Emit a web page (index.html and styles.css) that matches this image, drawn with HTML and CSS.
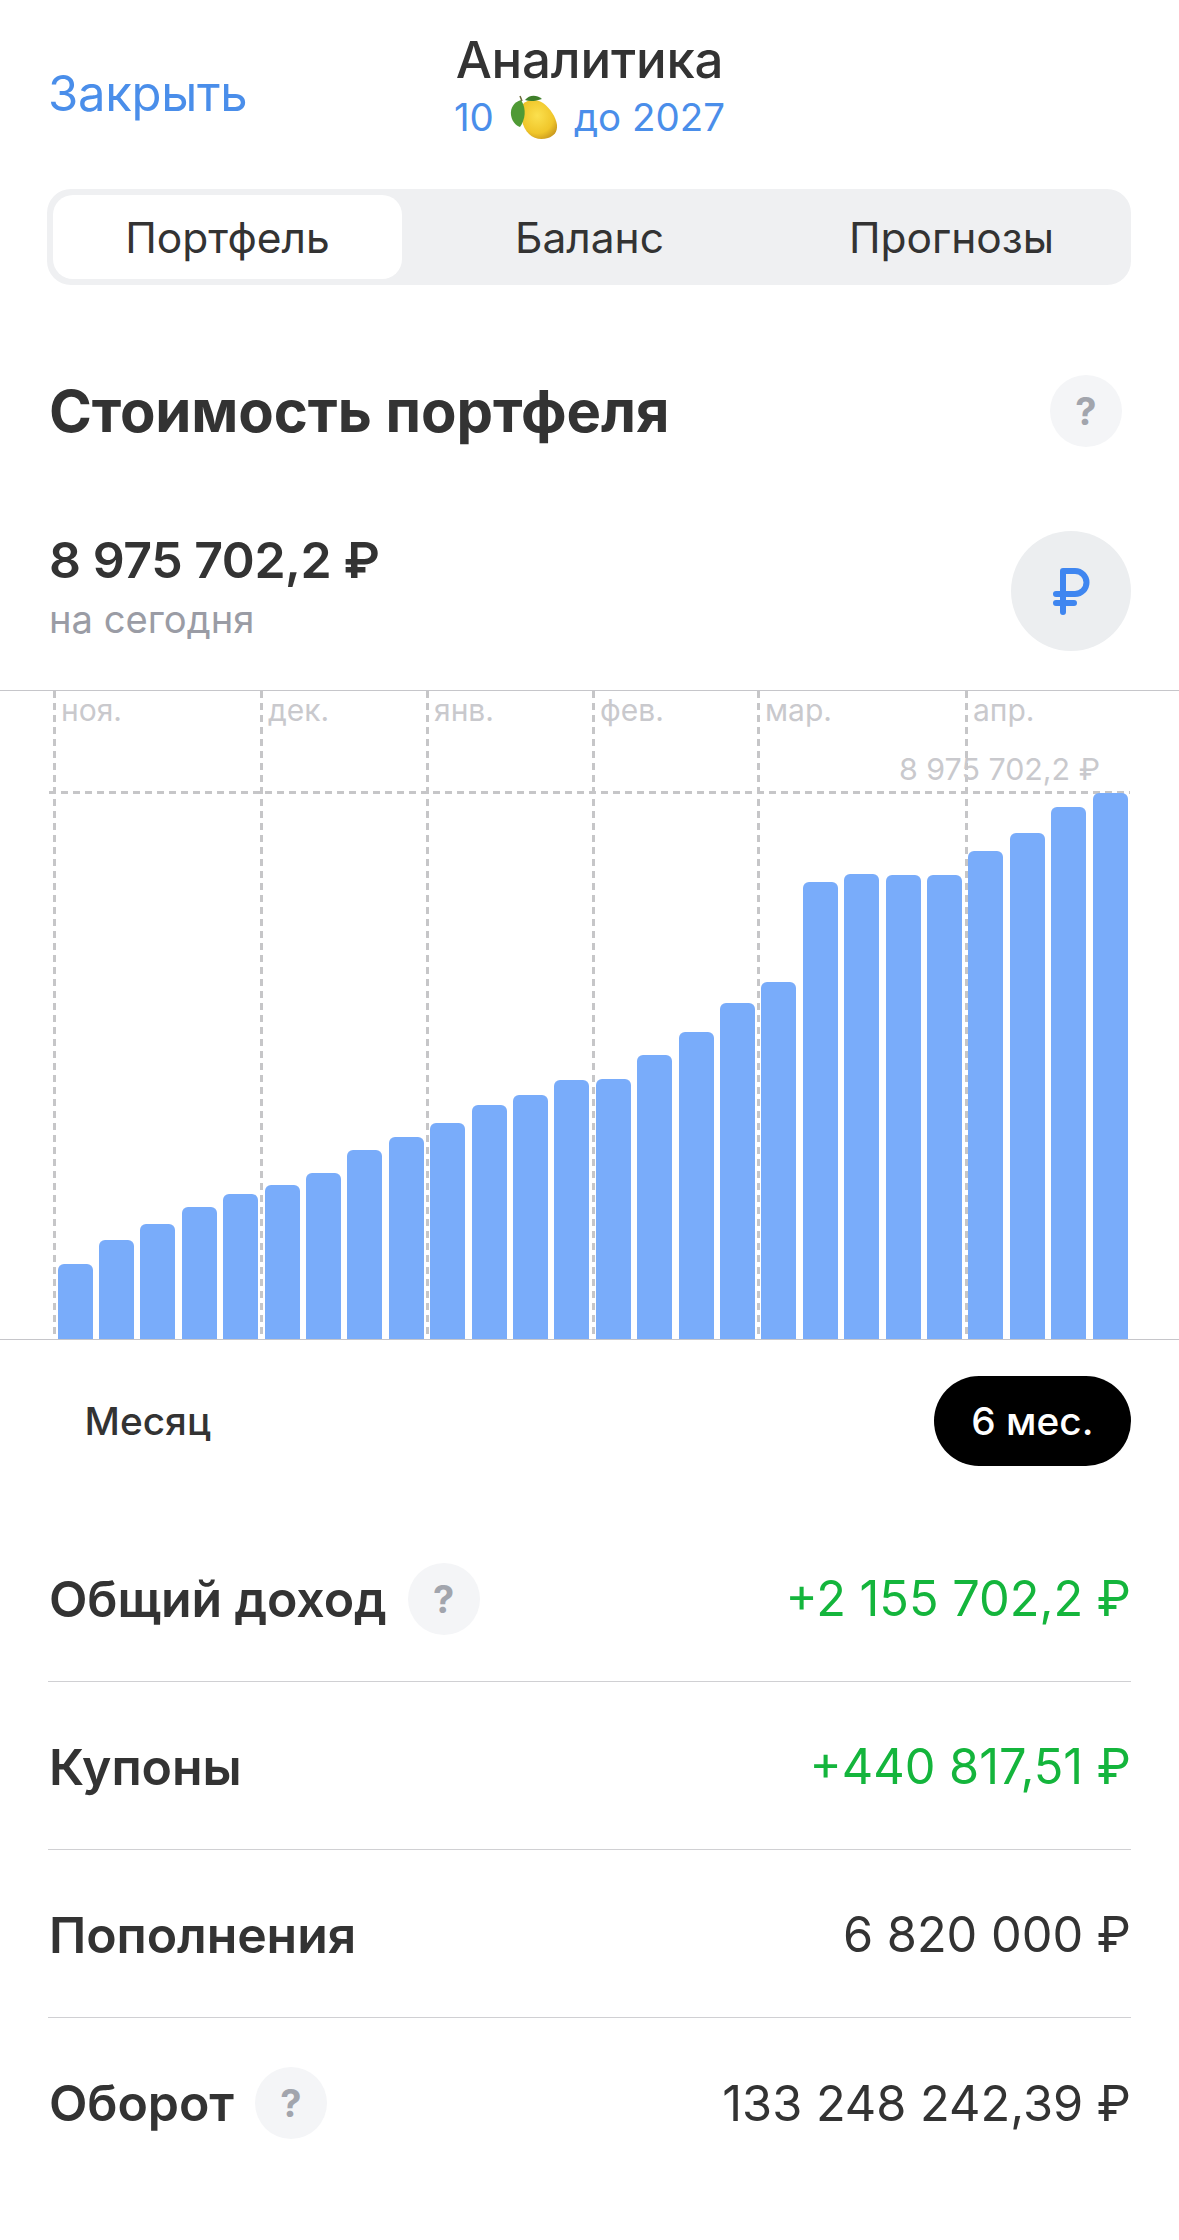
FILE: index.html
```html
<!DOCTYPE html>
<html lang="ru">
<head>
    <meta charset="UTF-8">
    <meta name="viewport" content="width=device-width, initial-scale=1.0">
    <title>Аналитика</title>
    <link rel="stylesheet" href="styles.css">
</head>
<body>
    <div class="header">
        <a class="close">Закрыть</a>
        <div class="header-title">
            <div class="title">Аналитика</div>
            <div class="subtitle">
                <span>10</span>
                <svg class="lemon" viewBox="0 0 48 46">
                    <defs>
                        <radialGradient id="lemonBody" cx="0.45" cy="0.4" r="0.7">
                            <stop offset="0" stop-color="#fbe04e"/>
                            <stop offset="0.65" stop-color="#f0c62a"/>
                            <stop offset="1" stop-color="#c4921c"/>
                        </radialGradient>
                    </defs>
                    <path d="M13 10 C18 5 27 5 33 9 C40 14 46 23 47 31 C47.5 38 44 42 38 44 C31 46 24 45 19 40 C12 33 9 21 13 10Z" fill="url(#lemonBody)"/>
                    <path d="M11 6 C4 8 0 14 1 21 C2 27 5 31 10 33 C15 26 17 15 11 6Z" fill="#4f9a35"/>
                    <path d="M15 6 C19 1 26 0 32 5 C26 7 20 8 15 6Z" fill="#3f7f2a"/>
                    <path d="M12 7 L10 2" stroke="#6b6a3a" stroke-width="1.5"/>
                </svg>
                <span>до 2027</span>
            </div>
        </div>
    </div>

    <div class="tabs">
        <div class="tab active">Портфель</div>
        <div class="tab">Баланс</div>
        <div class="tab">Прогнозы</div>
    </div>

    <div class="section-head">
        <h1>Стоимость портфеля</h1>
        <span class="help">?</span>
    </div>

    <div class="summary">
        <div>
            <div class="summary-value">8 975 702,2 ₽</div>
            <div class="summary-label">на сегодня</div>
        </div>
        <div class="currency">
            <svg viewBox="0 0 80 80" width="80" height="80">
                <path d="M32 61V20H44a11.5 11.5 0 0 1 0 23H25M25 52H43" fill="none" stroke="#3f86f0" stroke-width="6" stroke-linecap="round" stroke-linejoin="round"/>
            </svg>
        </div>
    </div>

    <div class="chart">
        <div class="vline" style="left: 53px"></div>
        <div class="vline" style="left: 260px"></div>
        <div class="vline" style="left: 426px"></div>
        <div class="vline" style="left: 592px"></div>
        <div class="vline" style="left: 757px"></div>
        <div class="vline" style="left: 965px"></div>
        <div class="hline"></div>
        <span class="month" style="left: 61px">ноя.</span>
        <span class="month" style="left: 268px">дек.</span>
        <span class="month" style="left: 434px">янв.</span>
        <span class="month" style="left: 600px">фев.</span>
        <span class="month" style="left: 765px">мар.</span>
        <span class="month" style="left: 973px">апр.</span>
        <span class="chart-max">8 975 702,2 ₽</span>
        <div class="bars">
            <div class="bar" style="height: 75px"></div>
            <div class="bar" style="height: 99px"></div>
            <div class="bar" style="height: 115px"></div>
            <div class="bar" style="height: 132px"></div>
            <div class="bar" style="height: 145px"></div>
            <div class="bar" style="height: 154px"></div>
            <div class="bar" style="height: 166px"></div>
            <div class="bar" style="height: 189px"></div>
            <div class="bar" style="height: 202px"></div>
            <div class="bar" style="height: 216px"></div>
            <div class="bar" style="height: 234px"></div>
            <div class="bar" style="height: 244px"></div>
            <div class="bar" style="height: 259px"></div>
            <div class="bar" style="height: 260px"></div>
            <div class="bar" style="height: 284px"></div>
            <div class="bar" style="height: 307px"></div>
            <div class="bar" style="height: 336px"></div>
            <div class="bar" style="height: 357px"></div>
            <div class="bar" style="height: 457px"></div>
            <div class="bar" style="height: 465px"></div>
            <div class="bar" style="height: 464px"></div>
            <div class="bar" style="height: 464px"></div>
            <div class="bar" style="height: 488px"></div>
            <div class="bar" style="height: 506px"></div>
            <div class="bar" style="height: 532px"></div>
            <div class="bar" style="height: 546px"></div>
        </div>
    </div>

    <div class="range">
        <div class="range-item">Месяц</div>
        <div class="range-item selected">6 мес.</div>
    </div>

    <div class="stats">
        <div class="stat">
            <div class="stat-name">Общий доход <span class="help">?</span></div>
            <div class="stat-value green">+2 155 702,2 ₽</div>
        </div>
        <div class="stat">
            <div class="stat-name">Купоны</div>
            <div class="stat-value green">+440 817,51 ₽</div>
        </div>
        <div class="stat">
            <div class="stat-name">Пополнения</div>
            <div class="stat-value">6 820 000 ₽</div>
        </div>
        <div class="stat">
            <div class="stat-name">Оборот <span class="help">?</span></div>
            <div class="stat-value">133 248 242,39 ₽</div>
        </div>
    </div>
</body>
</html>
```

FILE: styles.css
```css
body {
    margin: 0;
    font-family: Inter, "Liberation Sans", sans-serif;
    background: #fff;
    color: #333333;
}

.header {
    display: grid;
    grid-template-columns: 1fr auto 1fr;
    align-items: center;
    padding: 32px 48px 0;
    height: 114px;
}

.close {
    margin-top: 8px;
    font-size: 49px;
    letter-spacing: -0.3px;
    color: #4a8eea;
}

.header-title {
    text-align: center;
}

.title {
    font-size: 51px;
    line-height: 56px;
    font-weight: 500;
    letter-spacing: -0.2px;
}

.subtitle {
    display: flex;
    align-items: center;
    justify-content: center;
    gap: 16px;
    height: 58px;
    font-size: 38.5px;
    color: #4a8eea;
}

.lemon {
    width: 48px;
    height: 46px;
}

.tabs {
    display: grid;
    grid-template-columns: repeat(3, 349px);
    gap: 13px;
    box-sizing: border-box;
    width: 1084px;
    height: 96px;
    margin: 43px 0 0 47px;
    padding: 6px;
    background: #eff0f2;
    border-radius: 24px;
}

.tab {
    display: flex;
    align-items: center;
    justify-content: center;
    font-size: 42.5px;
    border-radius: 20px;
}

.tab.active {
    background: #fff;
}

.section-head {
    display: flex;
    align-items: center;
    justify-content: space-between;
    height: 72px;
    margin-top: 90px;
    padding: 0 57px 0 49px;
}

h1 {
    margin: 0;
    font-size: 58px;
    font-weight: 700;
    letter-spacing: -0.1px;
}

.help {
    display: inline-flex;
    align-items: center;
    justify-content: center;
    width: 72px;
    height: 72px;
    border-radius: 50%;
    background: #f4f5f7;
    color: #a2a5ad;
    font-size: 38px;
    font-weight: 700;
    letter-spacing: 0;
}

.summary {
    display: flex;
    justify-content: space-between;
    height: 120px;
    margin-top: 84px;
    padding: 0 48px 0 49px;
}

.summary-value {
    font-size: 50px;
    line-height: 58px;
    font-weight: 600;
    letter-spacing: -0.45px;
}

.summary-label {
    font-size: 38.2px;
    line-height: 60px;
    color: #9a9ca5;
}

.currency {
    display: flex;
    align-items: center;
    justify-content: center;
    width: 120px;
    height: 120px;
    border-radius: 50%;
    background: #eceef0;
}

.chart {
    position: relative;
    box-sizing: border-box;
    height: 650px;
    margin-top: 39px;
    border-top: 1px solid #c6c6ca;
    border-bottom: 1px solid #c6c6ca;
}

.vline {
    position: absolute;
    top: 0;
    bottom: 0;
    width: 3px;
    background: repeating-linear-gradient(to bottom, #c6c6c8 0, #c6c6c8 7px, transparent 7px, transparent 12px);
}

.hline {
    position: absolute;
    top: 100px;
    left: 49px;
    width: 1081px;
    height: 3px;
    background: repeating-linear-gradient(to right, #c6c6c8 0, #c6c6c8 7px, transparent 7px, transparent 12px);
}

.month {
    position: absolute;
    top: 2px;
    font-size: 30px;
    line-height: 34px;
    color: #c9c9cd;
}

.chart-max {
    position: absolute;
    top: 60px;
    right: 79px;
    font-size: 30.4px;
    line-height: 36px;
    color: #c9c9cd;
}

.bars {
    position: relative;
    display: flex;
    align-items: flex-end;
    gap: 6.42px;
    height: 100%;
    padding-left: 57.5px;
}

.bar {
    width: 35px;
    background: #79acfa;
    border-radius: 6px 6px 0 0;
}

.range {
    display: flex;
    align-items: center;
    justify-content: space-between;
    height: 90px;
    margin-top: 36px;
    padding: 0 48px 0 47px;
}

.range-item {
    padding: 0 37.5px;
    line-height: 90px;
    font-size: 38.8px;
    font-weight: 500;
}

.range-item.selected {
    background: #000;
    color: #fff;
    border-radius: 45px;
}

.stats {
    margin: 48px 48px 0 48px;
}

.stat {
    display: flex;
    align-items: center;
    justify-content: space-between;
    box-sizing: border-box;
    height: 168px;
    padding-top: 2px;
    border-bottom: 1.5px solid #d0d0d3;
}

.stat:last-child {
    border-bottom: none;
}

.stat-name {
    display: flex;
    align-items: center;
    gap: 21px;
    padding-left: 1px;
    font-size: 50px;
    font-weight: 600;
    letter-spacing: -0.1px;
}

.stat-value {
    font-size: 48.7px;
}

.green {
    color: #14b53c;
}
```
